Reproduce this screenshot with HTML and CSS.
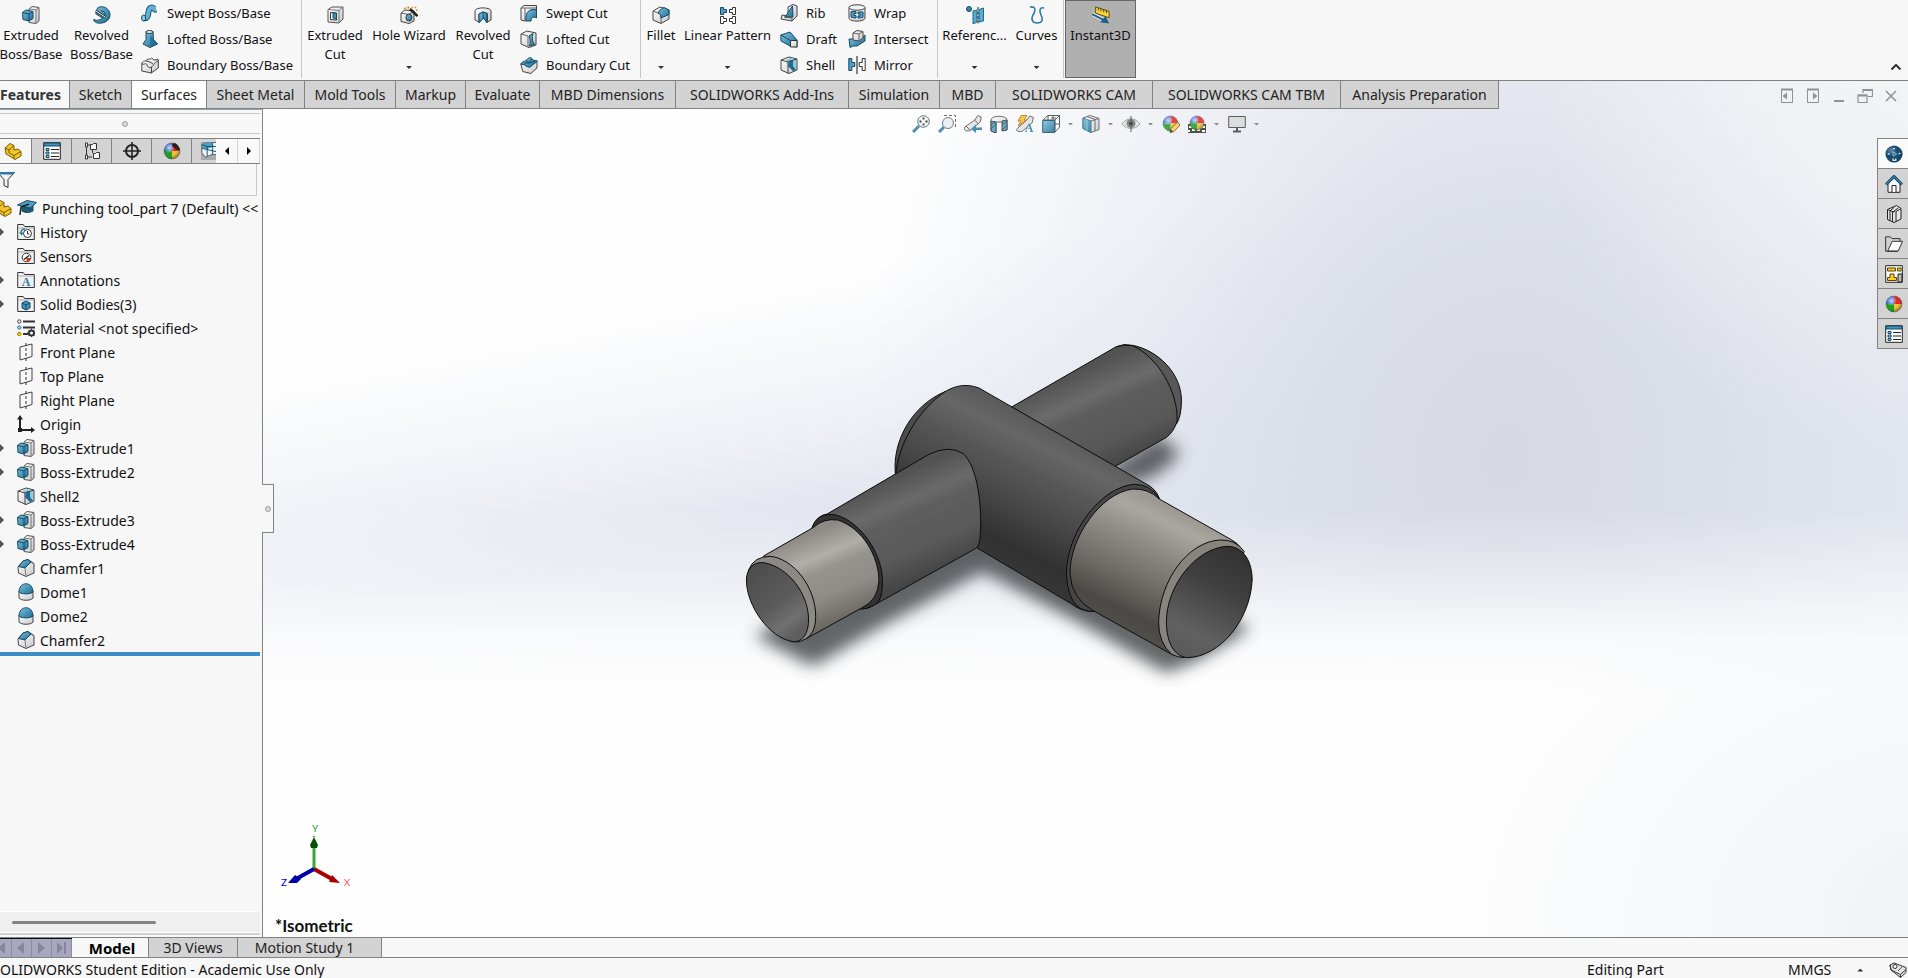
FILE: index.html
```html
<!DOCTYPE html>
<html lang="en">
<head>
  <meta charset="UTF-8" />
  <meta name="viewport" content="width=device-width, initial-scale=1.0" />
  <title>SOLIDWORKS - Punching tool_part 7</title>
  <link rel="stylesheet" href="styles.css">
</head>
<body>
  <!-- icon sprite -->
  <svg class="sprite" aria-hidden="true">
    <defs>
      <linearGradient id="blue" x1="0" y1="0" x2="1" y2="1"><stop offset="0" stop-color="#7cc4e4"/><stop offset="1" stop-color="#1f6a8f"/></linearGradient>
      <linearGradient id="white" x1="0" y1="0" x2="1" y2="1"><stop offset="0" stop-color="#fff"/><stop offset="1" stop-color="#c9c9c9"/></linearGradient>
      <radialGradient id="shine" cx=".35" cy=".3" r=".7"><stop offset="0" stop-color="#fff" stop-opacity=".75"/><stop offset=".5" stop-color="#fff" stop-opacity="0"/><stop offset="1" stop-color="#000" stop-opacity=".35"/></radialGradient>
    </defs>
    <symbol id="extrude" viewBox="0 0 18 18"><path d="M7 3l3-2.500 7 1v13.500l-3 2.500-7-1z" fill="url(#white)" stroke="#555"/><path d="M14 17V4L17 1.500M14 4L7 3" fill="none" stroke="#777"/><path d="M.5 6.500L4 4l7 1.500v7l-4 2.500-6-1.500z" fill="url(#blue)" stroke="#174b66"/><path d="M.5 6.500L7 8v7M7 8l4-2.500" fill="none" stroke="#174b66"/></symbol>
    <symbol id="revolve" viewBox="0 0 18 18"><path d="M5 1.500C11-1 17 3 17 9s-7 9-12 8c-2 0-4-1.500-4.500-3.500 4 1.500 7 .5 9-1.500L3 8c-1-2 1-1 0-3z" fill="url(#blue)" stroke="#174b66"/><path d="M8 5c4 0 5 3 3 5" fill="none" stroke="#174b66"/><path d="M3 5l9 6" stroke="#222" stroke-width="2.400"/><path d="M3 5l9 6" stroke="#fff"/></symbol>
    <symbol id="sweep" viewBox="0 0 18 18"><path d="M2.500 14C10 15.500 5 4 10.500 3.500c3-.5 2 3 4.500 2" fill="none" stroke="#174b66" stroke-width="6"/><path d="M2.500 14C10 15.500 5 4 10.500 3.500c3-.5 2 3 4.500 2" fill="none" stroke="#5fb0d5" stroke-width="4.200"/><ellipse cx="2.600" cy="14" rx="2" ry="3" fill="#8ed0ea" stroke="#174b66"/></symbol>
    <symbol id="loft" viewBox="0 0 18 18"><path d="M5 1.500h7l.5 8L16.500 14 9 17.500 2 14l3-4.500z" fill="url(#blue)" stroke="#174b66"/><path d="M9 5v12l7.500-3.500-4-4z" fill="#1f6287" opacity=".6"/><ellipse cx="8.500" cy="2" rx="3.600" ry="1.500" fill="#d8ecf6" stroke="#333"/></symbol>
    <symbol id="boundary" viewBox="0 0 18 18"><path d="M.8 7c2-3 3-1 5-3s3 0 5-2l2 2 4.500-.5V12l-7 5-9.500-2z" fill="url(#white)" stroke="#444"/><path d="M1 8c3 1 4-2 5 1s3 3 4.500 2c2-1 2-4 6.500-6M10.500 11v6M5 5l4 1 3 2" fill="none" stroke="#444"/></symbol>
    <symbol id="boundary-cut" viewBox="0 0 18 18"><path d="M.8 8l2 7.500 8 2L17 12V5l-6 5z" fill="url(#white)" stroke="#444"/><path d="M.8 8c2-3 3-2 5-3.500s3-3 5-3l2 2.500 4.500 1C15 8 12 8 10.500 11c-4 1-5-3-9.700-3z" fill="url(#blue)" stroke="#174b66"/><path d="M6 5l4 2 5-2M4 7l5 0 3-4" stroke="#174b66" fill="none"/></symbol>
    <symbol id="cut" viewBox="0 0 18 18"><path d="M2 3.500L6 1h11v12l-4 4-11-1z" fill="url(#white)" stroke="#555"/><path d="M2 3.500L13 4.500V17M13 4.500L17 1" fill="none" stroke="#777"/><path d="M4.500 6.500l6 .5v7l-6-.5z" fill="#fff" stroke="#333"/><path d="M7 7h3.500v5.500L7 12z" fill="#3f93bb" stroke="#174b66"/></symbol>
    <symbol id="hole" viewBox="0 0 18 18"><path d="M1 7l4-3 9 1v10l-5 2.500-8-2z" fill="url(#white)" stroke="#444"/><path d="M1 7l8 1.500 5-3.500" fill="none" stroke="#666"/><ellipse cx="9" cy="11.500" rx="3" ry="3.500" fill="url(#blue)" stroke="#333"/><path d="M10 3l7.500 7" stroke="#222" stroke-width="2.600"/><path d="M4 2l1 1M8 .5l1 2M12 1l1 1M15 2l1-1M6 1.500l.5 1M16 4l1.500.5" stroke="#e08a12" stroke-width="1.600"/></symbol>
    <symbol id="revolve-cut" viewBox="0 0 18 18"><path d="M1 4.500C3 1 15 1 17 4.500V14l-3.500 2V7.500L9 6 5 8v8l-4-2z" fill="url(#white)" stroke="#444"/><path d="M5 8l4-2 4 1.500V17L9.500 12 5 17z" fill="url(#blue)" stroke="#174b66"/><path d="M9.200 6v7" stroke="#174b66"/></symbol>
    <symbol id="sweep-cut" viewBox="0 0 18 18"><path d="M1 4l3-2.500h12.500V6C10 6 8 9 8 16l-3 1-4-1z" fill="url(#white)" stroke="#444"/><path d="M1 4h4v13M5 4h11" fill="none" stroke="#666"/><path d="M6 17c-1-9 4-13 10.500-11v8C13 12 11 14 11 17z" fill="url(#blue)" stroke="#174b66"/></symbol>
    <symbol id="loft-cut" viewBox="0 0 18 18"><path d="M1 4l6-3 9 2v12l-7 2.500L1 14z" fill="url(#white)" stroke="#444"/><path d="M1 4l7 2v11" fill="none" stroke="#666"/><path d="M9 6l4-2.500c-1 4-1 7 1.500 11L9.500 16c1-3 1-7-.5-10z" fill="url(#blue)" stroke="#174b66"/></symbol>
    <symbol id="fillet" viewBox="0 0 18 18"><path d="M1 5l7-4 9 3v9l-8 4.500L1 14z" fill="url(#white)" stroke="#444"/><path d="M1 5l5 2c2 .5 3 2 3 4v6" fill="none" stroke="#666"/><path d="M8 4l4-2.500 5 2.500v4.500L9 12c0-3-1-4.500-3-5z" fill="url(#blue)" stroke="#174b66"/></symbol>
    <symbol id="pattern" viewBox="0 0 18 18"><g fill="#fff" stroke="#333"><path d="M1.500 1.500h3v2h3v3h-3v2h-3z" fill="#4f9fc6" stroke="#174b66"/><path d="M10.500 3.500h3v-2h3v7h-3v-2h-3z"/><path d="M1.500 10.500h3v2h3v3h-3v2h-3zM10.500 12.500h3v-2h3v7h-3v-2h-3z"/></g></symbol>
    <symbol id="rib" viewBox="0 0 18 18"><path d="M8 3l5-2.500 4 1.500v10l-5 5-11-2 1-4 6 1z" fill="url(#white)" stroke="#444"/><path d="M12.500 2l.5 11-8 0z" fill="url(#blue)" stroke="#174b66"/><path d="M4 13l8 1v3" fill="none" stroke="#555"/></symbol>
    <symbol id="draft" viewBox="0 0 18 18"><path d="M.8 5L10 2l7 8v7l-7-1-9-5z" fill="url(#blue)" stroke="#174b66"/><path d="M10.500 10.500H17V17h-6.500z" fill="url(#white)" stroke="#333"/><path d="M1 5l9.500 5.500" stroke="#174b66"/></symbol>
    <symbol id="shell" viewBox="0 0 18 18"><path d="M1 4l8-3 8 2v11l-8 3.500L1 14z" fill="url(#white)" stroke="#444"/><path d="M6 3.500L10 2l6 1.500v10L13 15l-5-5z" fill="#8ecbe6"/><path d="M8 10l2-6 3 1v5l3 4-3 1z" fill="#1f6a8f"/><path d="M1 4l7 2v11.500M8 6l9-3" fill="none" stroke="#444"/></symbol>
    <symbol id="wrap" viewBox="0 0 18 18"><path d="M1 3.500v11c2 3.500 14 3.500 16 0v-11z" fill="url(#white)" stroke="#444"/><ellipse cx="9" cy="3.500" rx="8" ry="2.700" fill="#f4f4f4" stroke="#444"/><path d="M3 7.500h5v2H6v2h2V14c-2 0-4-.5-5-1zM10 8h5v5c-2 1-3 1-5 1v-2h2v-2h-2z" fill="#4f9fc6" stroke="#174b66"/></symbol>
    <symbol id="intersect" viewBox="0 0 18 18"><path d="M1 9h5l5 1 6-5v6l-8 5H5l-3 1.500z" fill="url(#blue)" stroke="#174b66"/><path d="M5 3l4-2.500 6 1V8l-4 3-6-1z" fill="url(#white)" stroke="#444"/><path d="M5 3l6 1v7M11 4l4-2.500" fill="none" stroke="#666"/></symbol>
    <symbol id="mirror" viewBox="0 0 18 18"><path d="M.8 2.500h3v4h3v4h-3v4h-3z" fill="#4f9fc6" stroke="#174b66"/><path d="M17.200 2.500h-3v4h-3v4h3v4h3z" fill="#fff" stroke="#333"/><path d="M9 0v18" stroke="#111"/></symbol>
    <symbol id="refgeo" viewBox="0 0 18 18"><circle cx="3" cy="3" r="2.500" fill="#3585ad" stroke="#174b66"/><path d="M7 5l4-1v12l-4 2zM13 3.500l4.500-1.500v13L13 16z" fill="#5aabd0" stroke="#1f6a8f"/><path d="M12 1v17" stroke="#222" stroke-dasharray="3 1.500"/></symbol>
    <symbol id="curves" viewBox="0 0 18 18"><path d="M2 1c7-1 5 5 3 8-2 4-1 8 4 8 6 0 6-4 4-8-2-5-1-8 3-7" fill="none" stroke="#2b7ba3" stroke-width="1.600"/></symbol>
    <symbol id="instant" viewBox="0 0 20 20"><path d="M4 1l15 5v7L4 8z" fill="#fbd43a" stroke="#574800"/><path d="M7 2v3M10 3v3M13 4v3M16 5v3" stroke="#333"/><path d="M0 9l14 7" stroke="#fff" stroke-width="4"/><path d="M0 9l14 7" stroke="#1d5f85" stroke-width="2.400"/><path d="M9 18l10 1.500-4-8z" fill="#1d5f85"/></symbol>
    <symbol id="part" viewBox="0 0 18 18"><path d="M1 6l5-4.500 4 2V8l4-1 3 2.500V14l-6 3.500-4-2.500-5-3z" fill="#f2c42c" stroke="#7a5c00"/><path d="M1 6l4 2 5-4.500M5 8v3l5 2.500L17 9.500M10 13.500V17" fill="none" stroke="#7a5c00"/></symbol>
    <symbol id="props" viewBox="0 0 18 18"><path d="M.7.700h16.600v16.600H.7z" fill="#fff" stroke="#222"/><path d="M1 1h16v3H1z" fill="#3f93bb" stroke="#174b66"/><path d="M3 6.500h3v2H3zM3 10h3v2H3zM3 13.500h3v2H3z" fill="#8ecbe6" stroke="#174b66"/><path d="M8 7.500h8M8 11h8M8 14.500h8" stroke="#222"/></symbol>
    <symbol id="config" viewBox="0 0 18 18"><path d="M4 3h4M4 15h5M9.500 8v3" stroke="#333" fill="none"/><path d="M2.500 1h2v4h-2zM2.500 13h2v4h-2zM3.500 5v8" fill="#fff" stroke="#333"/><path d="M7.500 2.500h2l1-1h3v6h-6zM10.500 11.500h2l1-1h3v6h-6z" fill="#f7f7f7" stroke="#333"/></symbol>
    <symbol id="target" viewBox="0 0 18 18"><circle cx="9" cy="9" r="6" fill="none" stroke="#222" stroke-width="2"/><path d="M9 0v18M0 9h18" stroke="#222" stroke-width="1.600"/></symbol>
    <symbol id="ball" viewBox="0 0 18 18"><path d="M9 9V1a8 8 0 0 1 8 8z" fill="#e02020"/><path d="M9 9h8a8 8 0 0 1-8 8z" fill="#f1c232"/><path d="M9 9v8a8 8 0 0 1-8-8z" fill="#11a011"/><path d="M9 9H1a8 8 0 0 1 8-8z" fill="#2a62d8"/><circle cx="9" cy="9" r="8" fill="url(#shine)" stroke="#555" stroke-width=".5"/></symbol>
    <symbol id="ballpen" viewBox="0 0 18 18"><use href="#ball" width="18" height="18"/><path d="M9 2c3-2 5 0 6 2l2 4-3 0-4-3z" fill="#222"/></symbol>
    <symbol id="cam" viewBox="0 0 18 20"><path d="M0 0h18v20H0z" fill="#a9a9a9"/><path d="M1 3l5-2.500h12V14h-6l-7 3-4-5z" fill="#e8f3f8" stroke="#555"/><path d="M1 3l5-2.500h7v5L6 8 1 6z" fill="#4f9fc6"/><path d="M1 3l6 2h11M7 5v11M1 7l17 4M13 1v13" fill="none" stroke="#174b66"/></symbol>
    <symbol id="funnel" viewBox="0 0 18 18"><path d="M.5 1.500h17l-6.500 7v8l-4-2v-6z" fill="#f3f3f3" stroke="#333"/><path d="M.5 1h17l-2 2.500h-13z" fill="#2b7ba3"/></symbol>
    <symbol id="cap" viewBox="0 0 20 18"><path d="M5 8v4c3 2 7 2 11 0V6z" fill="#1d5878" stroke="#174b66"/><path d="M.5 6L10 1.500l9.500 2-6 5.500z" fill="#4f9fc6" stroke="#174b66"/><path d="M12 5L4 8l-1 8" stroke="#222" stroke-width="1.500" fill="none"/></symbol>
    <symbol id="folder" viewBox="0 0 18 18"><path d="M.7 16.500V1.500h5.500l1.500 2h9.600v13z" fill="#efefef" stroke="#333"/><path d="M1 5h16" stroke="#aaa"/></symbol>
    <symbol id="history" viewBox="0 0 18 18"><use href="#folder"/><circle cx="10.500" cy="10.500" r="4" fill="#fff" stroke="#333"/><path d="M10.500 8v3h2" fill="none" stroke="#333"/><path d="M4 10c0-3 2-4 4-4" fill="none" stroke="#2b7ba3" stroke-width="1.600"/><path d="M2 9.500h5l-2.500 3z" fill="#2b7ba3"/></symbol>
    <symbol id="sensors" viewBox="0 0 18 18"><use href="#folder"/><circle cx="9.500" cy="10.500" r="4.300" fill="#fff" stroke="#333"/><path d="M9.500 11l4 0a4 4 0 0 1-4 4z" fill="#d33a1c"/><path d="M7 12.500l5-4" stroke="#222" stroke-width="1.500"/></symbol>
    <symbol id="bodies" viewBox="0 0 18 18"><use href="#folder"/><path d="M5 8l4-2 4 2v5l-4 2-4-2z" fill="#3f93bb" stroke="#174b66"/><path d="M5 8l4 2 4-2M9 10v5" fill="none" stroke="#174b66"/></symbol>
    <symbol id="material" viewBox="0 0 18 18"><path d="M6 2.500h12M6 8.500h12M6 15h5" stroke="#333" stroke-width="2"/><circle cx="2.300" cy="2.500" r="1.700" fill="#eee" stroke="#444"/><circle cx="2.300" cy="8.500" r="1.700" fill="#8ecbe6" stroke="#2b7ba3"/><circle cx="2.300" cy="15" r="1.800" fill="#f2c42c" stroke="#b08a00"/><circle cx="14.500" cy="14" r="2.500" fill="#fff" stroke="#333" stroke-width="2"/><path d="M14.500 9.500v9M10 14h8M11.500 11l6 6M17.500 11l-6 6" stroke="#333" stroke-dasharray="1.500 5.500"/></symbol>
    <symbol id="plane" viewBox="0 0 18 18"><path d="M3 4l12-3v12.500L3 17z" fill="#f7f7f7" stroke="#444"/><path d="M9 0v18" stroke="#333" stroke-dasharray="3 2"/></symbol>
    <symbol id="origin" viewBox="0 0 18 18"><path d="M3 3v12h12" fill="none" stroke="#222" stroke-width="2"/><path d="M0 4.500h6L3 0zM14 12v6l4-3zM1 13h4v4H1z" fill="#222"/></symbol>
    <symbol id="chamfer" viewBox="0 0 18 18"><path d="M1 8l5-6 5-1.500 6 4V14l-8 3.500L1.500 14z" fill="url(#white)" stroke="#444"/><path d="M6 2l5-1.500L14 3 8 9 1.500 7.500z" fill="url(#blue)" stroke="#174b66"/><path d="M14 3l3 2M8 9l1 8.500" fill="none" stroke="#777"/></symbol>
    <symbol id="dome" viewBox="0 0 18 18"><path d="M2 8v7c2 3 12 3 14 0V8z" fill="url(#white)" stroke="#444"/><path d="M2 9C2-2 16-2 16 9c-2 2.500-12 2.500-14 0z" fill="url(#blue)" stroke="#174b66"/></symbol>
    <symbol id="zoomfit" viewBox="0 0 18 18"><path d="M1 17l6-6" stroke="#2b7ba3" stroke-width="3"/><circle cx="11.500" cy="6.500" r="5.800" fill="#eef6fa" stroke="#555"/><path d="M11.500 2.500v2M11.500 8.500v2M7.500 6.500h2M13.500 6.500h2" stroke="#222" stroke-width="1.800"/></symbol>
    <symbol id="zoomarea" viewBox="0 0 18 18"><path d="M6 .5h11.500V13" fill="none" stroke="#555" stroke-dasharray="3 2"/><path d="M1 17l5-5" stroke="#2b7ba3" stroke-width="3"/><circle cx="10" cy="8" r="5.500" fill="#e6eff4" stroke="#666"/></symbol>
    <symbol id="prev" viewBox="0 0 18 18"><path d="M.8 12l10-7 3-4.500 3.500 1.500-1 5L7 15c-3 2-8 1-6.200-3z" fill="url(#white)" stroke="#555"/><path d="M10.500 5l4 4M2 11l4 4" stroke="#555"/><path d="M18 12.500h-6V9.500L7 14l5 4v-3h6z" fill="#2b7ba3"/></symbol>
    <symbol id="section" viewBox="0 0 18 18"><path d="M1 5c0-5 16-5 16 0v10h-4V7H6v11L1 16z" fill="url(#white)" stroke="#555"/><path d="M1 6l5 1v11l-5-2zM12 6l5-1v10l-5 1z" fill="#4f9fc6" stroke="#333"/><path d="M1 10l4-3M1 14l5-5M12 10l5-4M12 15l5-5" stroke="#174b66"/></symbol>
    <symbol id="orient" viewBox="0 0 18 18"><path d="M1 5l5-4.500h11.500V12L13 17V5z" fill="#fff" stroke="#444"/><path d="M6 .5V5M9 3h5M11 .5V5M13 5l4.500-4.500M13 9h4.500" stroke="#444" fill="none"/><path d="M.7 5.500h12v12H.7z" fill="url(#blue)" stroke="#174b66"/></symbol>
    <symbol id="display" viewBox="0 0 18 18"><path d="M1 3l7-2.500 9 3v11l-8 3-8-4z" fill="url(#white)" stroke="#555"/><path d="M1 3l8 3v11.500l-8-4z" fill="url(#blue)" stroke="#2b6d8f"/><path d="M5 1.500l8 3v11.500M9 6l8-2.500" fill="none" stroke="#555"/><path d="M5 4.500v11" stroke="#8ecbe6"/></symbol>
    <symbol id="eye" viewBox="0 0 18 18"><path d="M0 9c5-7 13-7 18 0-5 6-13 6-18 0z" fill="#e4e4e4" stroke="#999"/><circle cx="9" cy="8.500" r="4.500" fill="#777"/><circle cx="9" cy="8.500" r="2" fill="#222"/><path d="M9 1v16" stroke="#444"/></symbol>
    <symbol id="appearance" viewBox="0 0 18 18"><use href="#ball" width="17" height="17"/><path d="M8 17.500l1-4L15.500 7l2.500 3-6 6.500z" fill="#f7cf5a" stroke="#6a4d10"/><path d="M8 17.500l1-3 2 2z" fill="#222"/></symbol>
    <symbol id="scene" viewBox="0 0 18 18"><path d="M0 9h18v9H0z" fill="#333"/><path d="M1 11h3v2H1zM14 11h3v2h-3zM4 14h3v2H4zM9 14h3v2H9zM14 15h3v2h-3zM0 15h2v2H0z" fill="#fff"/><use href="#ball" x="1" width="16" height="16"/></symbol>
    <symbol id="screen" viewBox="0 0 18 18"><path d="M.7 1.500h16.600v11H.7z" fill="#d9d9d9" stroke="#444"/><path d="M9 12v4M5 16.500h8" stroke="#444" stroke-width="2"/></symbol>
    <symbol id="swx" viewBox="0 0 20 20"><circle cx="10" cy="10" r="9.500" fill="#12466e"/><circle cx="10" cy="10" r="9.500" fill="url(#shine)" opacity=".5"/><path d="M9 7.500l4 2.500-4 2.500z" fill="none" stroke="#8ecbe6"/><path d="M3 10h2M15 10l2-1M9 15v2h3v-2M9 4h2" stroke="#cfe6f2" stroke-width="1.500" fill="none"/></symbol>
    <symbol id="home" viewBox="0 0 18 18"><path d="M3 8v9.300h12V8L9 3z" fill="#f7f7f7" stroke="#222"/><path d="M7 17v-6.500h4V17" fill="#fff" stroke="#222"/><path d="M1 9.500l8-8 8 8" fill="none" stroke="#174b66" stroke-width="3"/><path d="M1 9.500l8-8 8 8" fill="none" stroke="#4f9fc6"/></symbol>
    <symbol id="library" viewBox="0 0 18 18"><path d="M2.500 4.500l9-4 4.500 3V14l-7 3.500-6.500-3z" fill="#e6e6e6" stroke="#222"/><path d="M5 16V6l4.500-4M7.500 17V7.500L13 3M11 16.500V6.500L16 3.500M2.500 4.500L8.500 7l1.500-1" fill="none" stroke="#222"/></symbol>
    <symbol id="open" viewBox="0 0 20 18"><path d="M.7 17V1h5l2 2h9v3" fill="#cfcfcf" stroke="#222"/><path d="M3 17L8 6h11.500l-5 11z" fill="#fafafa" stroke="#222"/><path d="M.7 17H14" stroke="#222"/></symbol>
    <symbol id="palette" viewBox="0 0 18 18"><path d="M.7.700h16.600v16.600H.7z" fill="#fff" stroke="#222"/><path d="M2.500 3h8v3h-8zM12.500 3H16v3h-3.500zM2.500 12.500H5V9h4v3.500h2.500v3h-9z" fill="#fbc92a" stroke="#5a4400"/><path d="M13 9h4v8h-4z" fill="#bbb" stroke="#222"/></symbol>
    <symbol id="dockleft" viewBox="0 0 16 16"><path d="M2.500 1.500h11v13h-11z" fill="none" stroke="#8f9196"/><path d="M2 1.500h12" stroke="#8f9196" stroke-width="2"/><path d="M8 4.500v7L3.500 8z" fill="#8f9196"/></symbol>
    <symbol id="dockright" viewBox="0 0 16 16"><path d="M2.500 1.500h11v13h-11z" fill="none" stroke="#8f9196"/><path d="M2 1.500h12" stroke="#8f9196" stroke-width="2"/><path d="M8 4.500v7L12.500 8z" fill="#8f9196"/></symbol>
    <symbol id="min" viewBox="0 0 16 16"><path d="M3 13h10" stroke="#8f9196" stroke-width="2"/></symbol>
    <symbol id="restore" viewBox="0 0 16 16"><path d="M6 5V1.500h9.500v7H11M1 7h9v7.500H1z" fill="none" stroke="#8f9196" stroke-width="1.200"/><path d="M6 2h9.500M1 7.500h9" stroke="#8f9196" stroke-width="2"/></symbol>
    <symbol id="close" viewBox="0 0 16 16"><path d="M3 3l10 10M13 3L3 13" stroke="#8f9196" stroke-width="1.500"/></symbol>
    <symbol id="first" viewBox="0 0 18 18"><path d="M10 3v12L3 9z" fill="#85859c"/></symbol>
    <symbol id="back" viewBox="0 0 18 18"><path d="M12 3v12L5 9z" fill="#85859c"/></symbol>
    <symbol id="next" viewBox="0 0 18 18"><path d="M6 3v12l7-6z" fill="#85859c"/></symbol>
    <symbol id="last" viewBox="0 0 18 18"><path d="M5 3v12l6-6zM12 3h2v12h-2z" fill="#85859c"/></symbol>
    <symbol id="tags" viewBox="0 0 18 18"><path d="M1 3l4-2 12 4.500v5l-5.500 5L2 8z" fill="#e2e2e2" stroke="#333"/><path d="M1 3l1 5 9.500 4.500 5.500-5M11.500 12.500v3" fill="none" stroke="#333"/><circle cx="6" cy="4.500" r="2" fill="#fff" stroke="#333"/><path d="M9 9l4-4" stroke="#555"/></symbol>
  </svg>

  <header class="ribbon">
    <div class="group boss">
      <button class="big"><svg><use href="#extrude"/></svg><span>Extruded Boss/Base</span></button>
      <button class="big"><svg><use href="#revolve"/></svg><span>Revolved Boss/Base</span></button>
      <div class="stack">
        <button class="small"><svg><use href="#sweep"/></svg>Swept Boss/Base</button>
        <button class="small"><svg><use href="#loft"/></svg>Lofted Boss/Base</button>
        <button class="small"><svg><use href="#boundary"/></svg>Boundary Boss/Base</button>
      </div>
    </div>
    <div class="group cuts">
      <button class="big"><svg><use href="#cut"/></svg><span>Extruded Cut</span></button>
      <button class="big"><svg><use href="#hole"/></svg><span>Hole Wizard</span><i class="caret"></i></button>
      <button class="big"><svg><use href="#revolve-cut"/></svg><span>Revolved Cut</span></button>
      <div class="stack">
        <button class="small"><svg><use href="#sweep-cut"/></svg>Swept Cut</button>
        <button class="small"><svg><use href="#loft-cut"/></svg>Lofted Cut</button>
        <button class="small"><svg><use href="#boundary-cut"/></svg>Boundary Cut</button>
      </div>
    </div>
    <div class="group shape">
      <button class="big"><svg><use href="#fillet"/></svg><span>Fillet</span><i class="caret"></i></button>
      <button class="big"><svg><use href="#pattern"/></svg><span>Linear Pattern</span><i class="caret"></i></button>
      <div class="stack">
        <button class="small"><svg><use href="#rib"/></svg>Rib</button>
        <button class="small"><svg><use href="#draft"/></svg>Draft</button>
        <button class="small"><svg><use href="#shell"/></svg>Shell</button>
      </div>
      <div class="stack">
        <button class="small"><svg><use href="#wrap"/></svg>Wrap</button>
        <button class="small"><svg><use href="#intersect"/></svg>Intersect</button>
        <button class="small"><svg><use href="#mirror"/></svg>Mirror</button>
      </div>
    </div>
    <div class="group ref">
      <button class="big"><svg><use href="#refgeo"/></svg><span>Referenc...</span><i class="caret"></i></button>
      <button class="big"><svg><use href="#curves"/></svg><span>Curves</span><i class="caret"></i></button>
    </div>
    <button class="big pressed"><svg><use href="#instant"/></svg><span>Instant3D</span></button>
    <button class="collapse" aria-label="Collapse ribbon"><svg viewBox="0 0 12 8"><path d="M1.500 6.500L6 2l4.500 4.500" fill="none" stroke="#333" stroke-width="2"/></svg></button>
  </header>

  <div class="workspace">
    <div class="tabbar">
      <nav class="tabs">
        <button class="active">Features</button>
        <button>Sketch</button>
        <button class="hover">Surfaces</button>
        <button>Sheet Metal</button>
        <button>Mold Tools</button>
        <button>Markup</button>
        <button>Evaluate</button>
        <button>MBD Dimensions</button>
        <button>SOLIDWORKS Add-Ins</button>
        <button>Simulation</button>
        <button>MBD</button>
        <button>SOLIDWORKS CAM</button>
        <button>SOLIDWORKS CAM TBM</button>
        <button>Analysis Preparation</button>
      </nav>
      <div class="window-controls">
        <button aria-label="Dock left"><svg><use href="#dockleft"/></svg></button>
        <button aria-label="Dock right"><svg><use href="#dockright"/></svg></button>
        <button aria-label="Minimize"><svg><use href="#min"/></svg></button>
        <button aria-label="Restore"><svg><use href="#restore"/></svg></button>
        <button aria-label="Close"><svg><use href="#close"/></svg></button>
      </div>
    </div>

    <div class="main">
      <aside class="panel">
        <div class="grip"><i class="dot"></i></div>
        <div class="panel-tabs">
          <button class="active" aria-label="Feature tree"><svg><use href="#part"/></svg></button>
          <button aria-label="Properties"><svg><use href="#props"/></svg></button>
          <button aria-label="Configurations"><svg><use href="#config"/></svg></button>
          <button aria-label="Dimensions"><svg><use href="#target"/></svg></button>
          <button aria-label="Display"><svg><use href="#ballpen"/></svg></button>
          <button class="cut-off" aria-label="CAM"><svg><use href="#cam"/></svg></button>
          <button class="arrow" aria-label="Scroll left"><svg viewBox="0 0 6 8"><path d="M5 0v8L1 4z"/></svg></button>
          <button class="arrow" aria-label="Scroll right"><svg viewBox="0 0 6 8"><path d="M1 0v8l4-4z"/></svg></button>
        </div>
        <div class="filter">
          <label for="filter" aria-label="Filter tree"><svg><use href="#funnel"/></svg></label>
          <input id="filter" type="text">
        </div>
        <ul class="tree">
          <li class="root"><svg><use href="#part"/></svg><svg class="hat"><use href="#cap"/></svg><span>Punching tool_part 7 (Default) &lt;&lt;</span></li>
          <li class="closed"><svg><use href="#history"/></svg>History</li>
          <li><svg><use href="#sensors"/></svg>Sensors</li>
          <li class="closed"><svg viewBox="0 0 18 18"><use href="#folder"/><text x="9" y="15" class="glyph">A</text></svg>Annotations</li>
          <li class="closed"><svg><use href="#bodies"/></svg>Solid Bodies(3)</li>
          <li><svg><use href="#material"/></svg>Material &lt;not specified&gt;</li>
          <li><svg><use href="#plane"/></svg>Front Plane</li>
          <li><svg><use href="#plane"/></svg>Top Plane</li>
          <li><svg><use href="#plane"/></svg>Right Plane</li>
          <li><svg><use href="#origin"/></svg>Origin</li>
          <li class="closed"><svg><use href="#extrude"/></svg>Boss-Extrude1</li>
          <li class="closed"><svg><use href="#extrude"/></svg>Boss-Extrude2</li>
          <li><svg><use href="#shell"/></svg>Shell2</li>
          <li class="closed"><svg><use href="#extrude"/></svg>Boss-Extrude3</li>
          <li class="closed"><svg><use href="#extrude"/></svg>Boss-Extrude4</li>
          <li><svg><use href="#chamfer"/></svg>Chamfer1</li>
          <li><svg><use href="#dome"/></svg>Dome1</li>
          <li><svg><use href="#dome"/></svg>Dome2</li>
          <li><svg><use href="#chamfer"/></svg>Chamfer2</li>
        </ul>
        <div class="hscroll"><i></i></div>
      </aside>

      <main class="viewport">
        <div class="splitter"><i class="dot"></i></div>
        <div class="view-tools">
          <button aria-label="Zoom to fit"><svg><use href="#zoomfit"/></svg></button>
          <button aria-label="Zoom to area"><svg><use href="#zoomarea"/></svg></button>
          <button aria-label="Previous view"><svg><use href="#prev"/></svg></button>
          <button aria-label="Section view"><svg><use href="#section"/></svg></button>
          <button aria-label="Dynamic annotation views"><svg viewBox="0 0 18 18"><path d="M.8 14l10-9 3-4 3.500 1.500-1 5-9 8c-3 2-8 1-6.500-1.500z" fill="url(#white)" stroke="#555"/><path d="M5 .5h6L8 5h3L2 11l3-5H2z" fill="#fbc02d" stroke="#a35c00" stroke-width=".8"/><text x="13" y="17" class="glyph">A</text></svg></button>
          <button aria-label="View orientation"><svg><use href="#orient"/></svg></button><i class="caret"></i>
          <button aria-label="Display style"><svg><use href="#display"/></svg></button><i class="caret"></i>
          <button aria-label="Hide or show items"><svg><use href="#eye"/></svg></button><i class="caret"></i>
          <button aria-label="Edit appearance"><svg><use href="#appearance"/></svg></button>
          <button aria-label="Apply scene"><svg><use href="#scene"/></svg></button><i class="caret"></i>
          <button aria-label="View settings"><svg><use href="#screen"/></svg></button><i class="caret"></i>
        </div>

        <svg class="model" viewBox="0 0 1568 1080" preserveAspectRatio="none">
          <defs>
            <linearGradient id="gMain" gradientUnits="userSpaceOnUse" x1="960" y1="345" x2="765" y2="706"><stop offset="0" stop-color="#5b5b5b"/><stop offset=".14" stop-color="#666"/><stop offset=".35" stop-color="#575757"/><stop offset=".6" stop-color="#474747"/><stop offset=".88" stop-color="#313131"/><stop offset="1" stop-color="#353535"/></linearGradient>
            <linearGradient id="gTube" gradientUnits="userSpaceOnUse" x1="440" y1="492" x2="570" y2="772"><stop offset="0" stop-color="#525252"/><stop offset=".26" stop-color="#6a6a6a"/><stop offset=".4" stop-color="#5e5e5e"/><stop offset=".72" stop-color="#5a5a5a"/><stop offset="1" stop-color="#454545"/></linearGradient>
            <linearGradient id="gBack" gradientUnits="userSpaceOnUse" x1="960" y1="172" x2="1090" y2="448"><stop offset="0" stop-color="#525252"/><stop offset=".28" stop-color="#6b6b6b"/><stop offset=".42" stop-color="#5d5d5d"/><stop offset=".75" stop-color="#585858"/><stop offset="1" stop-color="#454545"/></linearGradient>
            <linearGradient id="gSleeveL" gradientUnits="userSpaceOnUse" x1="195" y1="665" x2="305" y2="915"><stop offset="0" stop-color="#8d8984"/><stop offset=".27" stop-color="#b2afab"/><stop offset=".42" stop-color="#979490"/><stop offset=".7" stop-color="#8f8b86"/><stop offset="1" stop-color="#6c6863"/></linearGradient>
            <linearGradient id="gSleeveR" gradientUnits="userSpaceOnUse" x1="1330" y1="598" x2="1155" y2="938"><stop offset="0" stop-color="#9c9993"/><stop offset=".12" stop-color="#aaa7a1"/><stop offset=".35" stop-color="#8d8984"/><stop offset=".62" stop-color="#6f6c67"/><stop offset=".88" stop-color="#4b4945"/><stop offset="1" stop-color="#504e4a"/></linearGradient>
            <linearGradient id="gHoleL" x1="0" y1="0" x2=".6" y2="1"><stop offset="0" stop-color="#4a4a4a"/><stop offset=".6" stop-color="#5b5b5b"/><stop offset=".85" stop-color="#707070"/><stop offset="1" stop-color="#606060"/></linearGradient>
            <linearGradient id="gHoleR" x1=".7" y1="0" x2=".3" y2="1"><stop offset="0" stop-color="#333"/><stop offset=".35" stop-color="#404040"/><stop offset=".8" stop-color="#616161"/><stop offset="1" stop-color="#5a5a5a"/></linearGradient>
            <filter id="soft" x="-20%" y="-20%" width="140%" height="140%"><feGaussianBlur stdDeviation="24"/></filter>
          </defs>
          <path class="shadow" d="M100 950L260 1040L460 915L735 755L1000 905L1250 1060L1340 1020L1480 930L1200 700L720 620L300 800Z M1050 470L1230 345L1285 395Q1260 450 1170 490Z"/>
          <!-- back tube and its domed end -->
          <path class="edge" fill="#585858" d="M1110 80Q1130 70 1155 76C1225 90 1292 160 1292 240Q1292 290 1278 312L1240 300Z"/>
          <path class="edge" fill="url(#gBack)" d="M815 262L1108 81Q1130 72 1155 77C1225 110 1283 215 1280 303Q1270 337 1250 352L1105 440Z"/>
          <!-- main tube -->
          <path class="edge" fill="#4c4c4c" d="M491 462C482 360 540 255 630 215L650 300Z"/>
          <path class="edge" fill="url(#gMain)" d="M492 462C500 375 550 275 630 215C660 196 690 190 725 204L1190 490Q1220 505 1230 535L1050 874Q1010 875 985 852L720 684L600 600Z"/>
          <!-- front branch -->
          <path class="edge" fill="url(#gTube)" d="M258 622Q272 586 300 582L585 403Q640 374 680 400C722 440 735 560 728 655Q726 680 715 686L435 853Q412 869 388 866Z"/>
          <path class="edge" fill="#333" d="M258 622Q270 583 312 583C380 590 455 690 455 785Q455 845 432 855Q410 870 388 866L285 700Z"/>
          <path class="edge" fill="url(#gSleeveL)" d="M122 708L262 622Q290 594 330 600C400 625 445 710 445 782Q442 840 400 862L240 957L150 850Z"/>
          <path class="edge" fill="#8d8a85" d="M80 750Q95 709 140 709C205 715 268 800 268 890Q268 940 240 957Q222 970 200 965Z"/>
          <path class="edge" fill="url(#gHoleL)" d="M74 780C74 745 95 725 122 728C190 740 248 820 248 900C248 945 228 966 205 965C140 955 74 860 74 780Z"/>
          <!-- right sleeve -->
          <path class="edge" fill="#454545" d="M1230 535Q1205 493 1160 493C1070 500 972 630 970 760Q972 830 1000 858Q1020 877 1050 874Z"/>
          <path class="edge" fill="url(#gSleeveR)" d="M1230 537Q1200 505 1155 507C1065 520 978 655 980 762Q984 835 1045 872L1265 1003L1440 850L1462 690Q1450 668 1430 658Z"/>
          <path class="edge" fill="#87847e" d="M1265 1003Q1228 970 1228 905C1232 780 1310 665 1400 660Q1445 658 1468 695L1300 1013Q1280 1012 1265 1003Z"/>
          <path class="edge" fill="url(#gHoleR)" d="M1250 905C1250 800 1330 685 1420 679C1470 680 1490 730 1490 780C1485 900 1400 1010 1310 1013C1270 1010 1250 965 1250 905Z"/>
        </svg>

        <div class="triad">
          <svg viewBox="0 0 76 68">
            <path d="M34 46V18" stroke="#3aa63a" stroke-width="3"/><path d="M30 22l4-8 4 8-1 3h-6z" fill="#065306"/><path d="M34 14v-1" stroke="#3aa63a" stroke-width="2"/>
            <path d="M34 46l18 10" stroke="#a80000" stroke-width="4"/><path d="M52 52l8 8-11-1z" fill="#a80000"/>
            <path d="M34 46L16 56" stroke="#0000a8" stroke-width="4"/><path d="M15 52l-7 8h9l4-4z" fill="#0000a8"/>
            <text x="35" y="9" fill="#2a9a2a">Y</text><text x="67" y="63" fill="#f55">X</text><text x="4" y="63" fill="#00f">Z</text>
          </svg>
          <span>*Isometric</span>
        </div>

        <div class="task-pane">
          <button class="active" aria-label="SOLIDWORKS resources"><svg><use href="#swx"/></svg></button>
          <button aria-label="Home"><svg><use href="#home"/></svg></button>
          <button aria-label="Design library"><svg><use href="#library"/></svg></button>
          <button aria-label="File explorer"><svg><use href="#open"/></svg></button>
          <button aria-label="View palette"><svg><use href="#palette"/></svg></button>
          <button aria-label="Appearances"><svg><use href="#ball"/></svg></button>
          <button aria-label="Custom properties"><svg><use href="#props"/></svg></button>
        </div>
      </main>
    </div>
  </div>

  <div class="doc-tabs">
    <div class="steps">
      <button aria-label="First tab"><svg><use href="#first"/></svg></button>
      <button aria-label="Previous tab"><svg><use href="#back"/></svg></button>
      <button aria-label="Next tab"><svg><use href="#next"/></svg></button>
      <button aria-label="Last tab"><svg><use href="#last"/></svg></button>
    </div>
    <button class="doc active">Model</button>
    <button class="doc">3D Views</button>
    <button class="doc motion">Motion Study 1</button>
  </div>

  <footer class="status">
    <span class="edition">OLIDWORKS Student Edition - Academic Use Only</span>
    <span class="mode">Editing Part</span>
    <button class="units">MMGS<i class="caret up"></i></button>
    <button class="tags" aria-label="Tags"><svg><use href="#tags"/></svg></button>
  </footer>
</body>
</html>
```
FILE: styles.css
```css
* {
  box-sizing: border-box;
}
body {
  margin: 0;
  height: 100vh;
  display: flex;
  flex-direction: column;
  overflow: hidden;
  background: #f7f7f7;
  color: #111;
  font-family: "Noto Sans", "Open Sans", sans-serif;
  font-size: 13px;
}
button {
  border: none;
  padding: 0;
  margin: 0;
  background: none;
  color: inherit;
  font: inherit;
  white-space: nowrap;
}
svg {
  display: block;
  flex: none;
  width: 18px;
  height: 18px;
}
.sprite {
  position: absolute;
  width: 0;
  height: 0;
}
.glyph {
  font: bold 12px "Liberation Serif", serif;
  fill: #2b7ba3;
  text-anchor: middle;
}
.caret {
  width: 6px;
  height: 3px;
  background: #333;
  clip-path: polygon(0 0, 100% 0, 50% 100%);
}
.caret.up {
  clip-path: polygon(50% 0, 100% 100%, 0 100%);
}
.dot {
  width: 6px;
  height: 6px;
  border: 1px solid #999;
  border-radius: 50%;
  background: #ddd;
}

/* ribbon */
.ribbon {
  display: flex;
  flex: none;
  height: 81px;
  padding-bottom: 2px;
  border-bottom: 1px solid #808080;
}
.group {
  display: grid;
  border-right: 1px solid #c6c6c6;
}
.boss { grid-template-columns: 62px 65px 154px; gap: 7px; padding-right: 6px; }
.cuts { grid-template-columns: 54px 74px 54px 110px; gap: 10px; padding: 0 10px 0 6px; }
.shape { grid-template-columns: 28px 87px 59px 83px; gap: 9px; padding: 0 6px; }
.ref { grid-template-columns: 61px 43px; gap: 10px; padding: 0 5px 0 6px; }
.big {
  display: flex;
  flex-direction: column;
  align-items: center;
  height: 78px;
  padding: 6px 0 9px;
}
.big span {
  width: min-content;
  margin-top: 2px;
  line-height: 19px;
  white-space: normal;
}
.cuts .big:nth-child(2) span,
.shape .big span {
  white-space: nowrap;
}
.big .caret {
  margin-top: auto;
}
.pressed {
  width: 71px;
  margin-left: 1px;
  padding-top: 5px;
  border: 1px solid #666;
  background: #b0b0b0;
}
.stack {
  display: flex;
  flex-direction: column;
}
.small {
  display: flex;
  align-items: center;
  gap: 8px;
  height: 26px;
}
.collapse {
  margin-left: auto;
  align-self: flex-end;
  padding: 0 6px 7px;
}
.collapse svg {
  width: 12px;
  height: 8px;
}

/* command tabs */
.workspace {
  display: flex;
  flex-direction: column;
  flex: 1;
  min-height: 0;
  background:
    radial-gradient(ellipse 28% 45% at 103% 98%, #f0f2f6, rgba(240, 242, 246, 0)),
    linear-gradient(to bottom, rgba(254, 254, 254, 0) 50%, rgba(254, 254, 254, .4) 58%, rgba(254, 254, 254, .85) 65%, #fefefe 72%),
    radial-gradient(ellipse 22% 40% at 103% 5%, #f2f3f5, rgba(242, 243, 245, 0)),
    radial-gradient(ellipse 34% 100% at 79% 44%, #d6d9e4 0%, rgba(218, 222, 232, .9) 30%, rgba(226, 230, 239, .6) 60%, rgba(240, 243, 248, 0) 100%),
    linear-gradient(169deg, #fefefe 29%, #f0f2f7 40%, #e3e6ef 48%, #dee2eb 56%);
}
.tabbar {
  display: flex;
  justify-content: space-between;
  height: 28px;
}
.tabs {
  display: grid;
  grid-template-columns: 70px 62px 75px 98px 91px 70px 74px 136px 173px 91px 56px 157px 188px 158px;
  font-size: 14px;
}
.tabs button {
  border-right: 1px solid #828282;
  border-bottom: 1px solid #828282;
  background: #d3d3d3;
  color: #222;
}
.tabs .active {
  padding-right: 10px;
  background: #f7f7f7;
  color: #333;
  font-weight: bold;
}
.tabs .hover {
  background: #fff;
}
.window-controls {
  display: flex;
  align-items: center;
  gap: 10px;
  padding: 2px 9px 0 0;
}
.window-controls svg {
  width: 16px;
  height: 16px;
}

/* feature tree panel */
.main {
  display: flex;
  flex: 1;
  min-height: 0;
}
.panel {
  display: flex;
  flex-direction: column;
  flex: none;
  width: 263px;
  padding-right: 2px;
  border-right: 1px solid #828282;
  border-top: 1px solid #8fa5ac;
  background: #f7f7f7;
}
.grip {
  display: flex;
  align-items: center;
  justify-content: center;
  height: 21px;
  margin: 3px 0 4px;
  padding-right: 10px;
  border: solid #c8c8c8;
  border-width: 1px 0;
}
.panel-tabs {
  display: flex;
  height: 26px;
  border: solid #828282;
  border-width: 1px 0;
  background: #d3d3d3;
}
.panel-tabs button {
  display: flex;
  align-items: center;
  justify-content: center;
  width: 40px;
  border-right: 1px solid #828282;
}
.panel-tabs .active {
  width: 32px;
  padding-right: 6px;
  background: #f7f7f7;
}
.panel-tabs .cut-off {
  width: 24px;
  padding-left: 10px;
  border: none;
}
.panel-tabs .arrow {
  width: 22px;
  border-right: 1px solid #d3d3d3;
  background: #f9f9f9;
}
.arrow svg {
  width: 6px;
  height: 8px;
}
.filter {
  display: flex;
  align-items: center;
  height: 32px;
  width: 257px;
  border: solid #c8c8c8;
  border-width: 0 1px 1px 0;
}
.filter label {
  margin-left: -3px;
}
.filter input {
  flex: 1;
  min-width: 0;
  border: none;
  outline: none;
  background: none;
}
.tree {
  list-style: none;
  margin: 0;
  padding: 0;
  border-bottom: 4px solid #3a8dc5;
  font-size: 14px;
}
.tree li {
  display: flex;
  align-items: center;
  gap: 5px;
  height: 24px;
  padding-left: 17px;
  white-space: nowrap;
}
.tree .closed {
  padding-left: 0;
}
.tree .closed::before {
  content: "";
  width: 4px;
  height: 8px;
  margin-right: 8px;
  background: #555;
  clip-path: polygon(0 0, 100% 50%, 0 100%);
}
.tree .root {
  padding-left: 0;
}
.root svg:first-child {
  margin-left: -6px;
}
.root .hat {
  width: 20px;
}
.hscroll {
  display: flex;
  align-items: center;
  height: 22px;
  margin: auto 0 4px;
  padding-left: 12px;
  border-top: 1px solid #fff;
  border-bottom: 1px solid #fff;
  background: #efefef;
  box-shadow: 0 2px #d0d0d0;
}
.hscroll i {
  width: 144px;
  height: 3px;
  border-radius: 2px;
  background: #858585;
}

/* graphics area */
.viewport {
  position: relative;
  flex: 1;
  min-width: 0;
}
.splitter {
  position: absolute;
  left: -1px;
  top: 375px;
  display: flex;
  align-items: center;
  justify-content: center;
  width: 12px;
  height: 49px;
  border: 1px solid #828282;
  border-left: none;
  background: #f7f7f7;
}
.view-tools {
  display: flex;
  align-items: center;
  justify-content: center;
  gap: 8px;
  height: 30px;
}
.view-tools svg {
  opacity: .85;
}
.view-tools .caret {
  background: #888;
}
.model {
  position: absolute;
  left: 27.800%;
  top: 211px;
  width: 560px;
  height: 360px;
  overflow: visible;
}
.edge {
  stroke: #0c0c0c;
  stroke-width: 1;
  vector-effect: non-scaling-stroke;
}
.shadow {
  fill: #3e3f43;
  opacity: .8;
  filter: url(#soft);
}
.triad {
  position: absolute;
  left: 12px;
  bottom: 0;
  color: #111;
  font: 17px "Lato", sans-serif;
}
.triad svg {
  width: 76px;
  height: 68px;
  margin: 0 0 24px 5px;
}
.triad text {
  font: 10px "Lato", sans-serif;
  text-anchor: middle;
}
.triad span {
  display: block;
  line-height: 22px;
  font-weight: bold;
}
.task-pane {
  position: absolute;
  right: 0;
  top: 29px;
  width: 31px;
  border: 1px solid #828282;
  border-right: none;
}
.task-pane button {
  display: flex;
  align-items: center;
  justify-content: center;
  width: 100%;
  height: 30px;
  padding-left: 2px;
  border-bottom: 1px solid #828282;
  background: #d3d3d3;
}
.task-pane button:last-child {
  border-bottom: none;
  height: 29px;
}
.task-pane .active {
  background: #fafafa;
}

/* bottom bars */
.doc-tabs {
  display: flex;
  flex: none;
  height: 21px;
  border: solid #828282;
  border-width: 1px 0;
  font-size: 14px;
  line-height: 18px;
}
.steps {
  display: flex;
  width: 72px;
  overflow: hidden;
  border-top: 1px solid #111;
  background: #a7a7bf;
}
.steps button {
  width: 20px;
  border-right: 1px solid #8b8ba3;
}
.steps button:first-child {
  width: 12px;
}
.steps button:first-child svg {
  margin-left: -5px;
}
.doc {
  width: 89px;
  border-right: 1px solid #828282;
  background: #d3d3d3;
  color: #222;
}
.doc.active {
  width: 77px;
  padding-left: 4px;
  background: #f7f7f7;
  color: #000;
  font-size: 15px;
  font-weight: bold;
}
.doc.motion {
  width: 144px;
  padding-right: 10px;
}
.status {
  display: grid;
  grid-template-columns: 1fr 201px 101px 19px;
  flex: none;
  height: 20px;
  line-height: 24px;
  font-size: 14px;
}
.units {
  display: flex;
  align-items: center;
  gap: 26px;
  height: 24px;
}
.tags {
  padding-top: 2px;
}
```
